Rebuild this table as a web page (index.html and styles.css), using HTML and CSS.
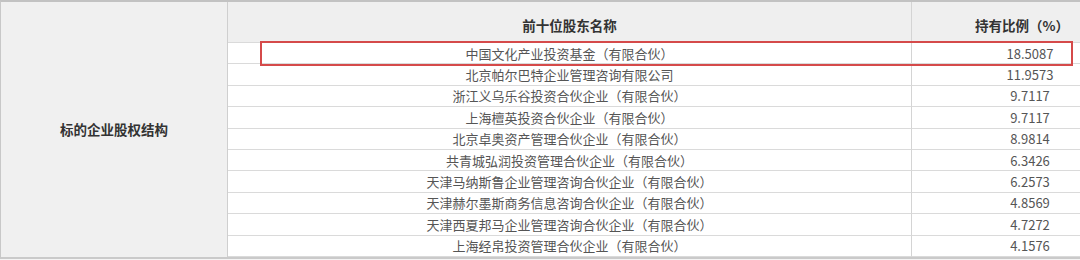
FILE: index.html
```html
<!DOCTYPE html>
<html lang="zh-CN">
<head>
<meta charset="utf-8">
<title>标的企业股权结构</title>
<link rel="stylesheet" href="styles.css">
</head>
<body>
<div class="wrap">
  <div class="grid">
    <div class="cell label">标的企业股权结构</div>
    <div class="cell head">前十位股东名称</div>
    <div class="cell head ratio">持有比例（%）</div>

    <div class="cell row">中国文化产业投资基金（有限合伙）</div><div class="cell row ratio">18.5087</div>
    <div class="cell row">北京帕尔巴特企业管理咨询有限公司</div><div class="cell row ratio">11.9573</div>
    <div class="cell row">浙江义乌乐谷投资合伙企业（有限合伙）</div><div class="cell row ratio">9.7117</div>
    <div class="cell row">上海檀英投资合伙企业（有限合伙）</div><div class="cell row ratio">9.7117</div>
    <div class="cell row">北京卓奥资产管理合伙企业（有限合伙）</div><div class="cell row ratio">8.9814</div>
    <div class="cell row">共青城弘润投资管理合伙企业（有限合伙）</div><div class="cell row ratio">6.3426</div>
    <div class="cell row">天津马纳斯鲁企业管理咨询合伙企业（有限合伙）</div><div class="cell row ratio">6.2573</div>
    <div class="cell row">天津赫尔墨斯商务信息咨询合伙企业（有限合伙）</div><div class="cell row ratio">4.8569</div>
    <div class="cell row">天津西夏邦马企业管理咨询合伙企业（有限合伙）</div><div class="cell row ratio">4.7272</div>
    <div class="cell row">上海经帛投资管理合伙企业（有限合伙）</div><div class="cell row ratio">4.1576</div>
  </div>
  <div class="highlight"></div>
</div>
</body>
</html>
```

FILE: styles.css
```css
html, body {
  margin: 0;
  padding: 0;
  background: #f4f4f4;
  overflow: hidden;
}
body {
  width: 1080px;
  height: 260px;
  font-family: "Noto Sans CJK SC", "Noto Sans", sans-serif;
}
.wrap {
  position: relative;
  width: 1080px;
}
.grid {
  display: grid;
  grid-template-columns: 227px 684px 1fr;
  grid-template-rows: 41px repeat(10, 21.4px);
  border-top: 2px solid #c2c2c2;
  border-left: 1px solid #c8c8c8;
  border-bottom: 2px solid #cacaca;
  background: #ffffff;
}
.cell {
  box-sizing: border-box;
  display: flex;
  align-items: center;
  justify-content: center;
  border-right: 1px solid #d4d4d4;
  border-bottom: 1px solid #dadada;
  white-space: nowrap;
}
.label {
  grid-row: 1 / 12;
  background: #f0f0f0;
  color: #333333;
  font-weight: bold;
  font-size: 13.5px;
  border-bottom: none;
  border-right: 1px solid #cfcfcf;
}
.head {
  background: #efefef;
  color: #333333;
  font-weight: bold;
  font-size: 13.5px;
  padding-top: 6px;
}
.row {
  color: #555555;
  font-size: 13px;
  background: #ffffff;
}
.ratio {
  border-right: none;
  padding-left: 68px;
}
.head.ratio {
  padding-left: 52px;
}
.highlight {
  position: absolute;
  left: 260px;
  top: 41px;
  width: 813px;
  height: 25px;
  box-sizing: border-box;
  border: 2.5px solid #d54a4a;
}
```
